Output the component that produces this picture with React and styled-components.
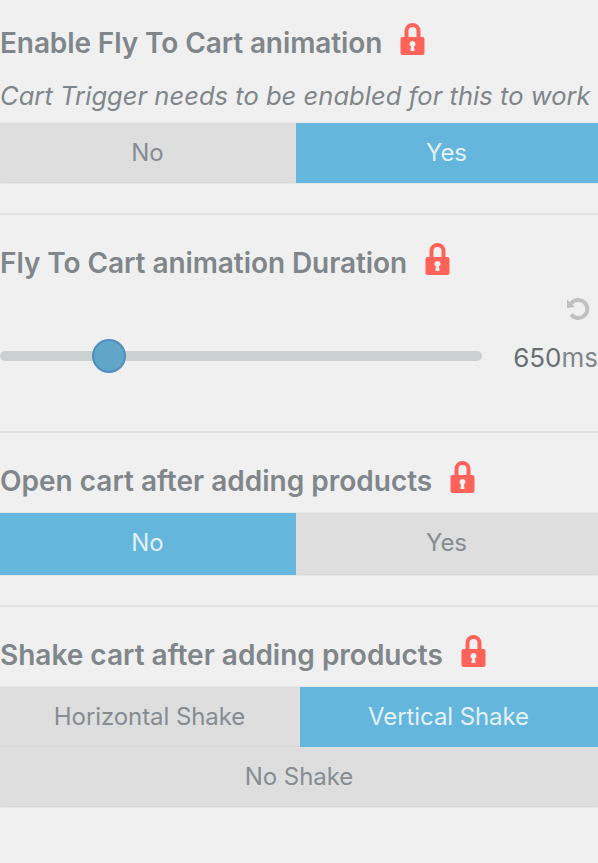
import React from "react";
import styled, { createGlobalStyle } from "styled-components";

const GlobalStyle = createGlobalStyle`
  * { box-sizing: border-box; }
  body {
    margin: 0;
    background: #f0f0f0;
    color: #80868a;
    font-family: Inter, "Liberation Sans", sans-serif;
    overflow: hidden;
  }
`;

const Panel = styled.main`
  width: 598px;
  height: 863px;
  display: flex;
  flex-direction: column;
  overflow: hidden;
`;

const Section = styled.section`
  flex: none;
  height: ${(p) => p.$height}px;
  padding-top: ${(p) => (p.$first ? 23 : 28)}px;
  border-bottom: ${(p) => (p.$last ? "none" : "2px solid #e2e2e2")};
`;

const HeadingRow = styled.header`
  display: flex;
  gap: 18px;
  height: 52px;
`;

const Heading = styled.h2`
  margin: 0;
  font-size: 28px;
  line-height: 40px;
  font-weight: 600;
  letter-spacing: ${(p) => p.$spacing || 0}px;
  font-variant-ligatures: none;
  font-feature-settings: "calt" 0;
  white-space: nowrap;
`;

const Lock = styled.svg`
  flex: none;
  width: 25px;
  height: 32px;
`;

const Note = styled.p`
  margin: 0;
  height: 48px;
  font-size: 25.5px;
  line-height: 42px;
  font-style: italic;
  letter-spacing: 0.04px;
  white-space: nowrap;
`;

const Choices = styled.div`
  display: grid;
  grid-template-columns: ${(p) => p.$first || 296}px 1fr;
  grid-auto-rows: ${(p) => p.$row || 60}px;
  box-shadow: 0 0 2px #d5d5d5;
`;

const Choice = styled.button`
  grid-column: ${(p) => (p.$wide ? "1 / -1" : "auto")};
  border: 0;
  padding: 0 ${(p) => (p.$wide ? 0 : 1)}px ${(p) => (p.$raised ? 3 : 1)}px 0;
  background: ${(p) => (p.$active ? "#64b6dc" : "#dedede")};
  color: ${(p) => (p.$active ? "#e3f1f8" : "#878c92")};
  box-shadow: ${(p) => (p.$active ? "none" : "inset 0 -1px 1px #d9d9d9")};
  font: 400 24px/30px Inter, "Liberation Sans", sans-serif;
  letter-spacing: -0.08px;
`;

const ResetRow = styled.div`
  display: flex;
  justify-content: flex-end;
  height: 28px;
  padding: 2px 8px 0 0;
`;

const ResetIcon = styled.svg`
  width: 24px;
  height: 24px;
`;

const SliderRow = styled.div`
  display: grid;
  grid-template-columns: 482px 1fr;
  align-items: center;
  height: 66px;
`;

const Track = styled.div`
  display: flex;
  align-items: center;
  height: 10px;
  padding-left: 92px;
  border-radius: 5px;
  background: #cbd1d3;
`;

const Thumb = styled.div`
  flex: none;
  width: 34px;
  height: 34px;
  border: 2px solid #528fbb;
  border-radius: 50%;
  background: #60a5ca;
`;

const Value = styled.output`
  padding-top: 4px;
  text-align: right;
  font-size: 26px;
  line-height: 32px;
  color: #696e71;
  white-space: nowrap;
`;

const Unit = styled.span`
  color: #80868a;
`;

function Title({ children, spacing }) {
  return (
    <HeadingRow>
      <Heading $spacing={spacing}>{children}</Heading>
      <Lock viewBox="0 0 25 32" aria-label="Locked">
        <path
          fill="#ff6259"
          fillRule="evenodd"
          d="M4.5 14V8a8 8 0 0 1 16 0v6h2a2 2 0 0 1 2 2v14a2 2 0 0 1-2 2h-20a2 2 0 0 1-2-2V16a2 2 0 0 1 2-2Zm4 0h8V8a4 4 0 0 0-8 0ZM12.5 18a3 3 0 0 0-1.5 5.6L10.4 28h4.2L14 23.6A3 3 0 0 0 12.5 18Z"
        />
      </Lock>
    </HeadingRow>
  );
}

export default function App() {
  return (
    <>
      <GlobalStyle />
      <Panel>
        <Section $height={215} $first>
          <Title spacing={-0.1}>Enable Fly To Cart animation</Title>
          <Note>Cart Trigger needs to be enabled for this to work</Note>
          <Choices>
            <Choice>No</Choice>
            <Choice $active>Yes</Choice>
          </Choices>
        </Section>
        <Section $height={218}>
          <Title spacing={-0.07}>Fly To Cart animation Duration</Title>
          <ResetRow>
            <ResetIcon viewBox="0 0 24 24" aria-label="Reset">
              <path d="M5.2 6.5A9 9 0 1 1 5.2 17.5" fill="none" stroke="#c0c0c0" strokeWidth="4" />
              <path d="M1 2.5v8.7l7.8-1.4Z" fill="#c0c0c0" />
            </ResetIcon>
          </ResetRow>
          <SliderRow>
            <Track><Thumb /></Track>
            <Value>650<Unit>ms</Unit></Value>
          </SliderRow>
        </Section>
        <Section $height={174}>
          <Title>Open cart after adding products</Title>
          <Choices $row={62}>
            <Choice $active $raised>No</Choice>
            <Choice $raised>Yes</Choice>
          </Choices>
        </Section>
        <Section $height={256} $last>
          <Title>Shake cart after adding products</Title>
          <Choices $first={300}>
            <Choice>Horizontal Shake</Choice>
            <Choice $active>Vertical Shake</Choice>
            <Choice $wide>No Shake</Choice>
          </Choices>
        </Section>
      </Panel>
    </>
  );
}
